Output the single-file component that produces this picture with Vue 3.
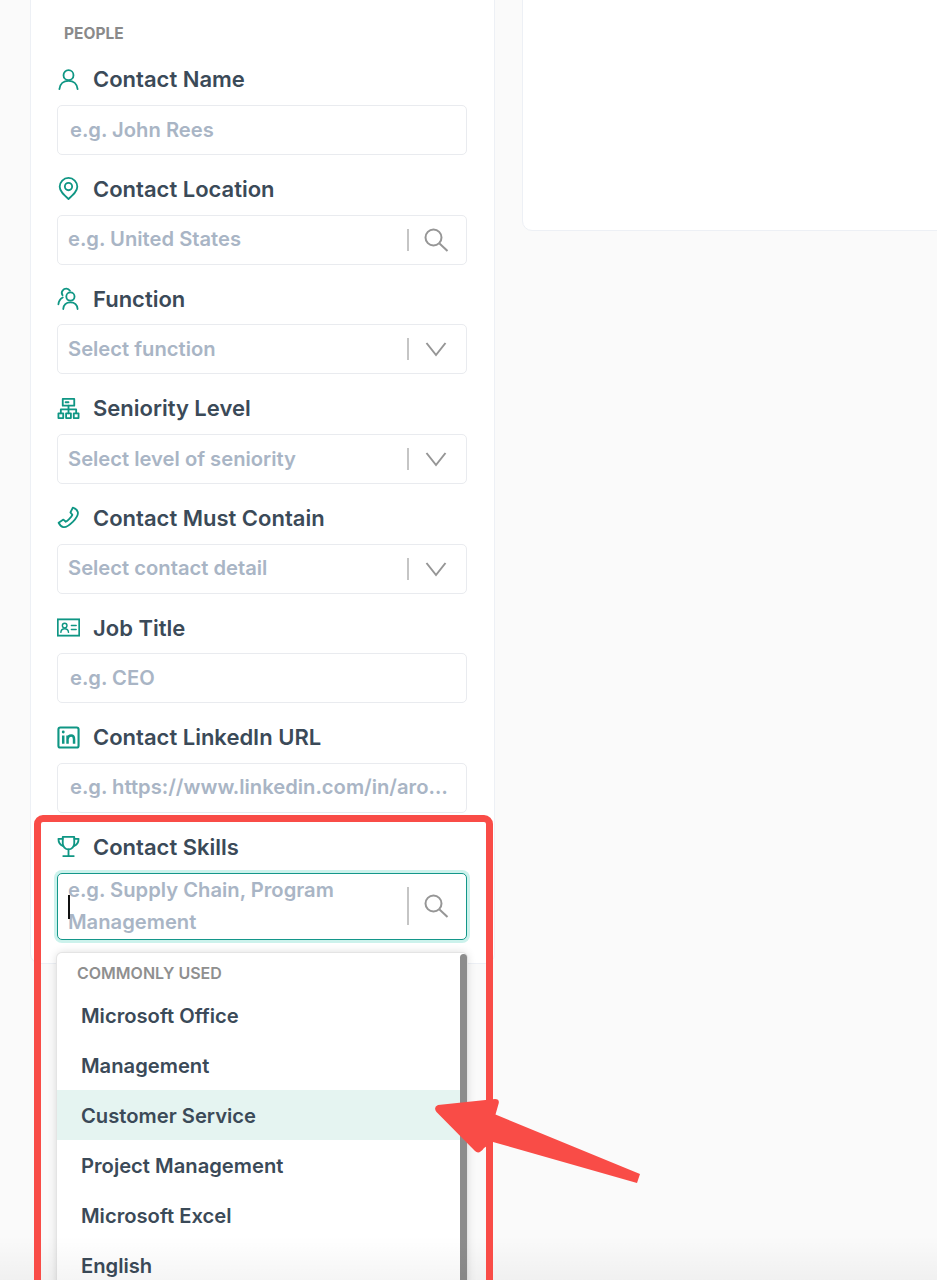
<script setup>
const fields = [
  { label: 'Contact Name', icon: 'person', text: 'e.g. John Rees', pad: 'wide' },
  { label: 'Contact Location', icon: 'pin', text: 'e.g. United States', addon: 'search' },
  { label: 'Function', icon: 'people', text: 'Select function', addon: 'chevron' },
  { label: 'Seniority Level', icon: 'org', text: 'Select level of seniority', addon: 'chevron' },
  { label: 'Contact Must Contain', icon: 'phone', text: 'Select contact detail', addon: 'chevron' },
  { label: 'Job Title', icon: 'card', text: 'e.g. CEO', pad: 'wide' },
  { label: 'Contact LinkedIn URL', icon: 'linkedin', text: 'e.g. https://www.linkedin.com/in/aro…', pad: 'wide' },
]
const skills = ['Microsoft Office', 'Management', 'Customer Service', 'Project Management', 'Microsoft Excel', 'English']
</script>

<template>
  <div class="page">
    <aside class="panel">
      <div class="heading">PEOPLE</div>
      <div v-for="f in fields" :key="f.label" class="field">
        <div class="label">
          <svg class="icon" viewBox="0 0 24 24" fill="none" stroke="currentColor" stroke-width="1.9" stroke-linecap="round" stroke-linejoin="round">
            <template v-if="f.icon === 'person'">
              <circle cx="12" cy="7.5" r="5.2" />
              <path d="M2.5 22c.6-5.4 4.4-8.6 9.500-8.600S20.900 16.600 21.500 22" />
            </template>
            <template v-else-if="f.icon === 'pin'">
              <path d="M12 23C7 18.600 2.800 14.800 2.800 10.200a9.200 9.200 0 0 1 18.400 0C21.200 14.800 17 18.600 12 23Z" />
              <circle cx="12" cy="10" r="3.800" />
            </template>
            <template v-else-if="f.icon === 'people'">
              <circle cx="14" cy="10" r="4.300" />
              <path d="M6.500 23c.4-4.700 3.200-7 7.500-7s7.100 2.300 7.500 7" />
              <path d="M13.500 3.800A4.600 4.600 0 0 0 6 3.500c-1.300 1.500-1.200 3.600-.2 5.200" />
              <path d="M1.500 18c.3-3 1.700-5.500 4.500-7" />
            </template>
            <template v-else-if="f.icon === 'org'">
              <rect x="6" y="2" width="12" height="7" />
              <path d="M9 5.500h3M12 9v4M4 17v-4h16v4M12 13v4" />
              <rect x="1.500" y="17" width="5" height="5" />
              <rect x="9.500" y="17" width="5" height="5" />
              <rect x="17.500" y="17" width="5" height="5" />
            </template>
            <template v-else-if="f.icon === 'phone'">
              <path d="M16.500 1.800c2.200.6 4.600 2.400 5.200 4.400.5 2-1 6-5 10.200-4 4-8 6.200-10.200 5.600-2-.5-3.800-2.500-4.800-4.500l5-3.300 2.500 2.200c1.800-.7 5.700-4.500 6.800-7.200l-2-2.600 2.500-4.800Z" />
            </template>
            <template v-else-if="f.icon === 'card'">
              <rect x="0.800" y="3.500" width="22.400" height="17" stroke-linecap="butt" stroke-linejoin="miter" />
              <circle cx="8" cy="10" r="2.400" stroke-width="1.500" />
              <path d="M4 17c.3-2.500 1.800-3.600 4-3.600s3.700 1.100 4 3.600M15 10h5M15 14h5" stroke-width="1.500" />
            </template>
            <template v-else-if="f.icon === 'linkedin'">
              <rect x="1.500" y="1.500" width="21" height="21" rx="2" stroke-width="2.200" />
              <path d="M6.500 10v8.500M11 18.500V10M11 13.500c.5-2.300 2-3.500 3.800-3.500 2 0 3 1.400 3 3.800v4.700" stroke-width="2.600" stroke-linecap="butt" />
              <circle cx="6.500" cy="6.300" r="1.500" fill="currentColor" stroke="none" />
            </template>
          </svg>
          <span>{{ f.label }}</span>
        </div>
        <div class="input" :class="{ wide: f.pad === 'wide' }">
          <span class="placeholder">{{ f.text }}</span>
          <template v-if="f.addon">
            <i class="divider"></i>
            <svg v-if="f.addon === 'search'" class="addon" viewBox="0 0 26 26" fill="none" stroke="#969696" stroke-width="2">
              <circle cx="10.500" cy="10.500" r="8" />
              <path d="m16.500 16.500 8 7.500" />
            </svg>
            <svg v-else class="addon" viewBox="0 0 26 26" fill="none" stroke="#969696" stroke-width="2">
              <path d="m3.500 7 9.500 12 9.500-12" />
            </svg>
          </template>
        </div>
      </div>
      <div class="field">
        <div class="label">
          <svg class="icon" viewBox="0 0 24 24" fill="none" stroke="currentColor" stroke-width="1.900" stroke-linecap="round" stroke-linejoin="round">
            <path d="M6 2h12v6.500c0 3.600-2.600 6.500-6 6.500s-6-2.900-6-6.500V2Z" />
            <path d="M6 4H1.500c0 4 1.700 6.500 5 7.500M18 4h4.500c0 4-1.700 6.500-5 7.500M12 15v6M6.500 22h11" />
          </svg>
          <span>Contact Skills</span>
        </div>
        <div class="input focused">
          <span class="placeholder two-line">e.g. Supply Chain, Program Management</span>
          <i class="caret"></i>
          <i class="divider tall"></i>
          <svg class="addon" viewBox="0 0 26 26" fill="none" stroke="#969696" stroke-width="2">
            <circle cx="10.500" cy="10.500" r="8" />
            <path d="m16.500 16.500 8 7.500" />
          </svg>
        </div>
      </div>
    </aside>
    <section class="card"></section>

    <div class="dropdown">
      <div class="dropdown-title">COMMONLY USED</div>
      <div v-for="s in skills" :key="s" class="option" :class="{ active: s === 'Customer Service' }">{{ s }}</div>
      <i class="scrollbar"></i>
    </div>

    <div class="fade"></div>
    <div class="highlight"></div>
    <svg class="arrow" viewBox="0 0 937 1280">
      <path d="M438 1105 495 1099Q500 1099 498.500 1104L495.500 1114.500 640 1174 637 1183 493 1142 484 1148Q479 1155 475 1151L436.500 1112Q433 1107 438 1105Z" fill="#f94c47" />
    </svg>
  </div>
</template>

<style>
html, body { margin: 0; background: #fafafa; }
</style>

<style scoped>
.page {
  position: relative;
  display: flex;
  align-items: flex-start;
  width: 937px;
  height: 1280px;
  overflow: hidden;
  background: #fafafa;
  font-family: Inter, "Liberation Sans", sans-serif;
}
.panel {
  flex: none;
  box-sizing: border-box;
  width: 465px;
  height: 974px;
  margin: -10px 0 0 30px;
  padding: 33px 26px 0;
  background: #fff;
  border: 1px solid #edf0f5;
  border-radius: 0 0 10px 10px;
}
.heading {
  height: 21.400px;
  margin-left: 7px;
  color: #8a8a8a;
  font-size: 15.500px;
  font-weight: 700;
  line-height: 20px;
}
.field { width: 410px; }
.label {
  display: flex;
  align-items: center;
  gap: 13px;
  height: 59.670px;
  padding-top: 9px;
  padding-bottom: 1px;
  box-sizing: border-box;
  color: #3b4a58;
  font-size: 22px;
  font-weight: 600;
  line-height: 30px;
}
.field:first-of-type .label { height: 51px; padding-top: 0; padding-bottom: 0; }
.icon {
  flex: none;
  width: 23px;
  height: 23px;
  color: #0f9684;
}
.input {
  display: flex;
  align-items: center;
  box-sizing: border-box;
  height: 50px;
  padding: 0 17px 0 10px;
  background: #fff;
  border: 1px solid #e9ebef;
  border-radius: 5px;
}
.input.wide { padding-left: 12px; }
.placeholder {
  flex: 1;
  min-width: 0;
  padding-bottom: 2px;
  color: #a9b5c5;
  font-size: 20.200px;
  font-weight: 600;
  white-space: nowrap;
}
.divider {
  flex: none;
  width: 2px;
  height: 22px;
  margin-right: 14px;
  background: #c5c5c5;
}
.addon {
  flex: none;
  width: 26px;
  height: 26px;
}
.input.focused {
  position: relative;
  height: 67px;
  border-color: #14978a;
  box-shadow: 0 0 0 3px #ccf2ec;
}
.two-line {
  padding-bottom: 0;
  line-height: 32px;
  white-space: normal;
}
.divider.tall { height: 38px; }
.caret {
  position: absolute;
  left: 10px;
  top: 21px;
  width: 1.500px;
  height: 24px;
  background: #111;
}
.card {
  flex: none;
  box-sizing: border-box;
  width: 500px;
  height: 241px;
  margin: -10px 0 0 27px;
  background: #fff;
  border: 1px solid #edf0f5;
  border-radius: 10px;
}
.dropdown {
  position: absolute;
  left: 57px;
  top: 953px;
  box-sizing: border-box;
  width: 410px;
  height: 340px;
  background: #fff;
  border-radius: 5px;
  box-shadow: 0 0 0 1px #e4e4e4, 0 0 10px rgba(0, 0, 0, 0.16);
}
.dropdown-title {
  height: 37px;
  padding-left: 20px;
  color: #8f8f8f;
  font-size: 16px;
  font-weight: 600;
  line-height: 40px;
}
.option {
  height: 50px;
  padding-left: 24px;
  color: #3b4a58;
  font-size: 20.200px;
  font-weight: 600;
  line-height: 51px;
}
.option.active { background: #e5f4f1; }
.scrollbar {
  position: absolute;
  top: 1px;
  right: 0;
  width: 7px;
  height: 100%;
  background: #8c8c8c;
  border-radius: 4px;
}
.fade {
  position: absolute;
  left: 0;
  right: 0;
  bottom: 0;
  height: 44px;
  background: linear-gradient(to bottom, rgba(0, 0, 0, 0), rgba(0, 0, 0, 0.04));
}
.highlight {
  position: absolute;
  left: 34px;
  top: 815px;
  box-sizing: border-box;
  width: 459px;
  height: 500px;
  border: 7.500px solid #f94c47;
  border-radius: 9px;
}
.arrow {
  position: absolute;
  inset: 0;
  width: 937px;
  height: 1280px;
}
</style>
